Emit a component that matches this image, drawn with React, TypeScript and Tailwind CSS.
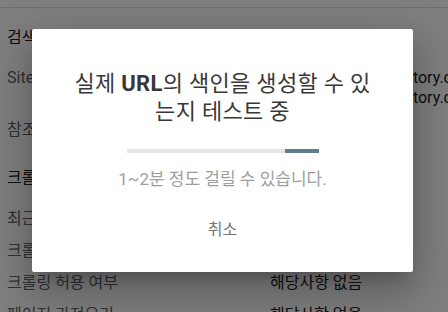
import React from 'react';

const rows = [
    { label: '검색 결과 노출 여부', value: '', strong: true, h: 'h-[40px]' },
    { label: 'Sitemap', value: 'https://webnotes.tistory.com/sitemap.xml', value2: 'https://webnotes.tistory.com/rss', h: 'h-[52px]' },
    { label: '참조 페이지', value: '감지되지 않음', h: 'h-[48px]' },
    { label: '크롤링', value: '', strong: true, h: 'h-[41px]' },
    { label: '최근 크롤링', value: '해당사항 없음', h: 'h-[32px]' },
    { label: '크롤링한 사용자 에이전트', value: '해당사항 없음', h: 'h-[32px]' },
    { label: '크롤링 허용 여부', value: '해당사항 없음', h: 'h-[32px]' },
    { label: '페이지 가져오기', value: '해당사항 없음', h: 'h-[28px]' },
];

const App: React.FC = () => {
    return (
        <div className="relative w-[448px] h-[312px] overflow-hidden bg-white font-['Roboto','Noto_Sans_CJK_KR',sans-serif]">
            {/* Page behind the dialog */}
            <div className="flex flex-col">
                <div className="h-[8px] border-b border-[#dadce0]" />
                <div className="flex flex-col pl-[7px] pt-[20px]">
                    {rows.map((row, i) => (
                        <div key={i} className={`flex items-start shrink-0 ${row.h}`}>
                            <div
                                className={`w-[263px] shrink-0 text-[16px] leading-[20px] whitespace-nowrap ${
                                    row.strong ? 'text-[#202124]' : 'text-[#5f6368]'
                                }`}
                            >
                                {row.label}
                            </div>
                            <div className="flex flex-col text-[16px] leading-[20px] text-[#202124] whitespace-nowrap">
                                <span>{row.value}</span>
                                {row.value2 && <span>{row.value2}</span>}
                            </div>
                        </div>
                    ))}
                </div>
            </div>

            {/* Overlay */}
            <div className="absolute inset-0 bg-black/50 flex items-start justify-start">
                <div className="mt-[29px] ml-[32px] w-[381px] h-[243px] bg-white rounded-[2px] shadow-[0_11px_15px_-7px_rgba(0,0,0,0.2),0_24px_38px_3px_rgba(0,0,0,0.14),0_9px_46px_8px_rgba(0,0,0,0.12)] flex flex-col items-center px-[37px] pt-[41px]">
                    <h2 className="text-[22px] leading-[28px] tracking-[0.3px] text-[#383838] text-center font-normal">
                        실제 <span className="font-bold">URL</span>의 색인을 생성할 수 있는지 테스트 중
                    </h2>
                    <div className="mt-[23px] w-[192px] h-[4px] bg-[#e6e6e6] flex justify-end">
                        <div className="w-[34px] h-full bg-[#607d8b]" />
                    </div>
                    <p className="mt-[14px] text-[17px] leading-[24px] text-[#9e9e9e]">1~2분 정도 걸릴 수 있습니다.</p>
                    <button className="mt-[29px] text-[16px] leading-[20px] text-[#757575]">취소</button>
                </div>
            </div>
        </div>
    );
};

export default App;
